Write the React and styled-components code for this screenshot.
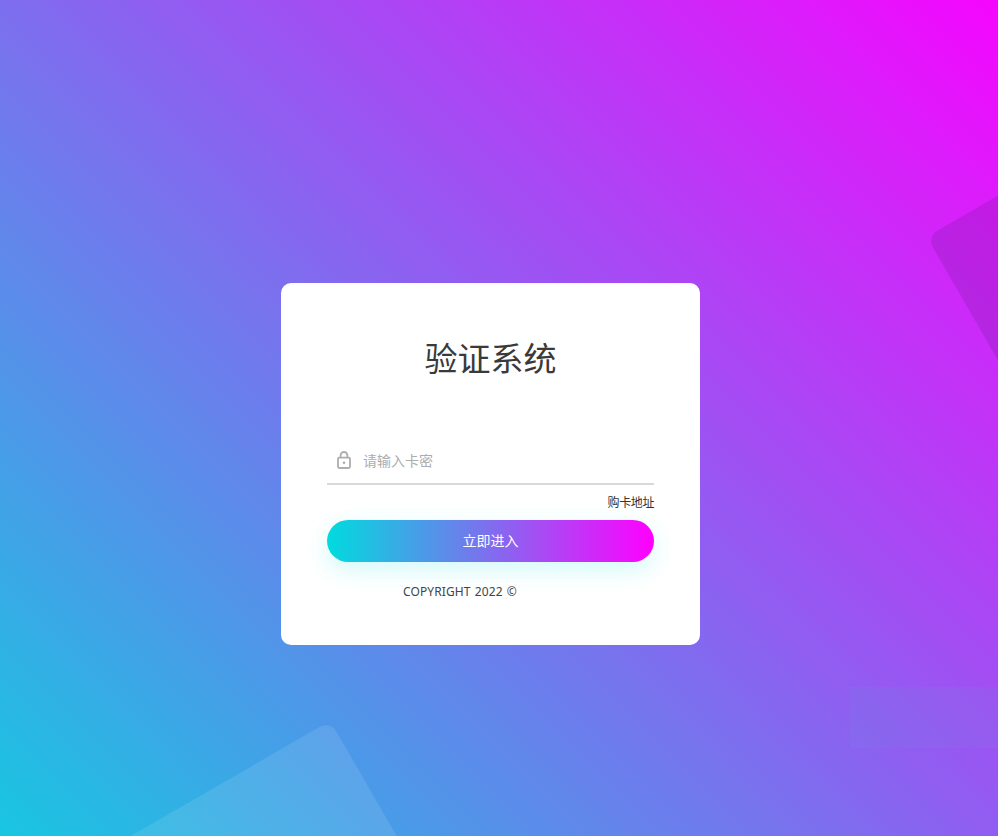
import React from "react";
import styled, { createGlobalStyle } from "styled-components";

const cjk = `"Noto Sans CJK SC", "Open Sans", sans-serif`;

const GlobalStyle = createGlobalStyle`
  html, body {
    margin: 0;
    padding: 0;
    height: 100%;
  }
  * {
    box-sizing: border-box;
  }
`;

const Page = styled.div`
  position: relative;
  overflow: hidden;
  width: 100%;
  height: 836px;
  padding-top: 283px;
  padding-left: 281px;
  background: linear-gradient(45deg, #00dbde -11%, #fc00ff 103%);
  font-family: ${cjk};
`;

const Tile = styled.div`
  position: absolute;
  left: ${(p) => p.$left}px;
  top: ${(p) => p.$top}px;
  width: 400px;
  height: 400px;
  border-radius: 12px;
  background: ${(p) => p.$fill};
  transform: rotate(-30deg);
`;

const Strip = styled.div`
  position: absolute;
  left: 850px;
  top: 687px;
  width: 148px;
  height: 61px;
  background: rgba(110, 145, 225, 0.13);
`;

const Card = styled.form`
  position: relative;
  width: 419px;
  height: 362px;
  padding: 52px 46px 0;
  border-radius: 10px;
  background: #fff;
`;

const Title = styled.h1`
  margin: 0;
  font-size: 33px;
  line-height: 44px;
  font-weight: 400;
  text-align: center;
  color: #3a3a3a;
`;

const Field = styled.label`
  display: flex;
  align-items: center;
  height: 50px;
  margin-top: 56px;
  padding: 1px 0 0 10px;
  border-bottom: 2px solid #d9d9d9;
`;

const LockIcon = styled.svg`
  flex: none;
  width: 14px;
  height: 18px;
  margin-right: 12px;
  color: #adadad;
`;

const Input = styled.input`
  flex: 1;
  min-width: 0;
  height: 100%;
  padding: 0;
  border: 0;
  outline: 0;
  background: transparent;
  font-family: ${cjk};
  font-size: 14px;
  color: #333;

  &::placeholder {
    color: #adadad;
    opacity: 1;
  }
`;

const LinkRow = styled.div`
  display: flex;
  justify-content: flex-end;
  height: 34.5px;
  padding-top: 8px;
`;

const BuyLink = styled.a`
  font-size: 12px;
  line-height: 18px;
  letter-spacing: -0.4px;
  color: #333;
  text-decoration: none;
`;

const Submit = styled.button`
  display: block;
  width: 100%;
  height: 42px;
  padding: 0 0 2px;
  border: 0;
  border-radius: 21px;
  background: linear-gradient(to right, #00dbde, #ff00ff);
  box-shadow: 0 8px 24px 0 rgba(0, 219, 222, 0.18);
  font-family: ${cjk};
  font-size: 14px;
  color: #fff;
  cursor: pointer;
`;

const Copyright = styled.p`
  margin: 21.5px 0 0;
  padding-right: 61px;
  font-family: "Noto Sans", "Open Sans", sans-serif;
  font-size: 12px;
  line-height: 18px;
  letter-spacing: 0.1px;
  word-spacing: 1px;
  text-align: center;
  color: #444;
`;

export default function App() {
  return (
    <Page>
      <GlobalStyle />
      <Tile $left={1000} $top={110} $fill="rgba(40, 20, 90, 0.14)" />
      <Tile $left={57} $top={794} $fill="rgba(255, 255, 255, 0.1)" />
      <Strip />
      <Card onSubmit={(e) => e.preventDefault()}>
        <Title>验证系统</Title>
        <Field>
          <LockIcon viewBox="0 0 14 18" fill="none" stroke="currentColor" strokeWidth="1.8">
            <rect x="1" y="6.6" width="12" height="10.4" rx="1.2" />
            <path d="M3.6 6.6V4.4a3.4 3.4 0 0 1 6.8 0v2.2" />
            <circle cx="7" cy="11.8" r="1.3" fill="currentColor" stroke="none" />
          </LockIcon>
          <Input type="text" placeholder="请输入卡密" autoComplete="off" />
        </Field>
        <LinkRow>
          <BuyLink href="#">购卡地址</BuyLink>
        </LinkRow>
        <Submit type="submit">立即进入</Submit>
        <Copyright>COPYRIGHT 2022 ©</Copyright>
      </Card>
    </Page>
  );
}
